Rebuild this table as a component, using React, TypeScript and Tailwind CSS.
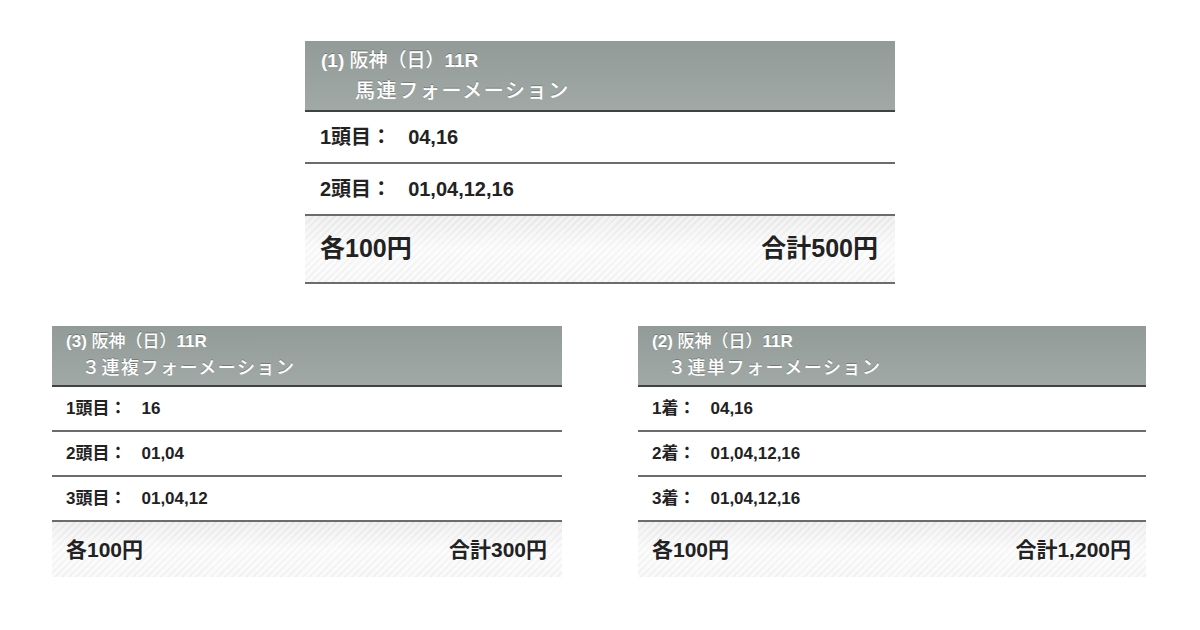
const font = "font-['Liberation_Sans','Noto_Sans_CJK_JP',sans-serif]"

type Ticket = {
  no: number
  kind: string
  rows: { label: string; value: string }[]
  unit: string
  total: string
}

const top: Ticket = {
  no: 1,
  kind: '馬連フォーメーション',
  rows: [
    { label: '1頭目', value: '04,16' },
    { label: '2頭目', value: '01,04,12,16' },
  ],
  unit: '各100円',
  total: '合計500円',
}

const bottom: Ticket[] = [
  {
    no: 3,
    kind: '３連複フォーメーション',
    rows: [
      { label: '1頭目', value: '16' },
      { label: '2頭目', value: '01,04' },
      { label: '3頭目', value: '01,04,12' },
    ],
    unit: '各100円',
    total: '合計300円',
  },
  {
    no: 2,
    kind: '３連単フォーメーション',
    rows: [
      { label: '1着', value: '04,16' },
      { label: '2着', value: '01,04,12,16' },
      { label: '3着', value: '01,04,12,16' },
    ],
    unit: '各100円',
    total: '合計1,200円',
  },
]

const headerBg = 'bg-[linear-gradient(to_bottom,#929b97,#a0a9a5)]'
const footerBg =
  'bg-[linear-gradient(to_bottom,rgba(0,0,0,0.03),rgba(255,255,255,0.5)_50%,rgba(255,255,255,0.2)),repeating-linear-gradient(135deg,#eeeeee_0px,#eeeeee_2px,#f9f9f9_2px,#f9f9f9_5px)]'

function Title({ no }: { no: number }) {
  return (
    <div>
      <span className="font-bold">({no})</span> 阪神（日）<span className="font-bold">11R</span>
    </div>
  )
}

function BigCard({ t }: { t: Ticket }) {
  return (
    <div className="w-[590px]">
      <div className={`${headerBg} h-[71px] border-b-2 border-[#3f4442] px-4 pt-[5px] text-[19px] leading-[30px] font-medium text-white [text-shadow:0_-1px_0_rgba(0,0,0,0.25)]`}>
        <Title no={t.no} />
        <div className="pl-[34px] text-[20px] tracking-[1.6px]">{t.kind}</div>
      </div>
      {t.rows.map((r) => (
        <div key={r.label} className="flex h-[52px] items-center border-b-2 border-[#6c6c6c] px-[15px] text-[20px] font-bold text-[#222]">
          <span>{r.label}：</span>
          <span className="ml-[17px]">{r.value}</span>
        </div>
      ))}
      <div className={`${footerBg} flex h-[68px] items-center justify-between border-b-2 border-[#6c6c6c] pr-[17px] pl-[15px] text-[25px] font-bold text-[#222]`}>
        <span>{t.unit}</span>
        <span>{t.total}</span>
      </div>
    </div>
  )
}

function SmallCard({ t, width }: { t: Ticket; width: string }) {
  return (
    <div className={width}>
      <div className={`${headerBg} h-[61px] border-b-2 border-[#3f4442] px-[14px] pt-[3px] text-[17px] leading-[26px] font-medium text-white [text-shadow:0_-1px_0_rgba(0,0,0,0.25)]`}>
        <Title no={t.no} />
        <div className="pl-[16px] text-[18px] tracking-[1.5px]">{t.kind}</div>
      </div>
      {t.rows.map((r) => (
        <div key={r.label} className="flex h-[45px] items-center border-b-2 border-[#6c6c6c] px-[14px] text-[17px] font-bold text-[#222]">
          <span>{r.label}：</span>
          <span className="ml-[15px]">{r.value}</span>
        </div>
      ))}
      <div className={`${footerBg} flex h-[55px] items-center justify-between pr-[15px] pl-[14px] text-[21px] font-bold text-[#222]`}>
        <span>{t.unit}</span>
        <span>{t.total}</span>
      </div>
    </div>
  )
}

export default function App() {
  return (
    <div className={`${font} h-[630px] w-[1200px] bg-white pt-[41px]`}>
      <div className="flex justify-center">
        <BigCard t={top} />
      </div>
      <div className="mt-[42px] flex gap-[76px] pl-[52px]">
        <SmallCard t={bottom[0]} width="w-[510px]" />
        <SmallCard t={bottom[1]} width="w-[508px]" />
      </div>
    </div>
  )
}
